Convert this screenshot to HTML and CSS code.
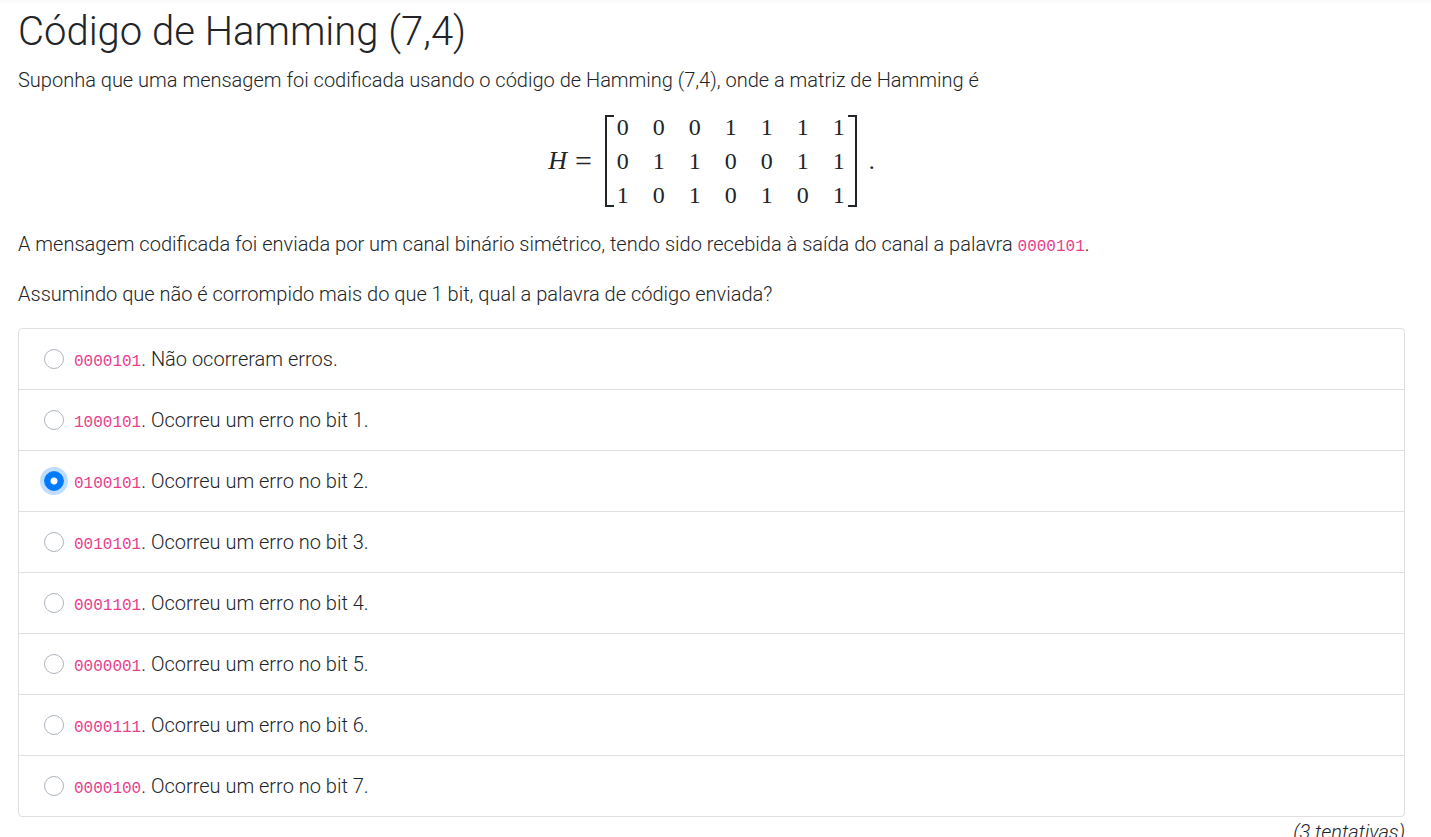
FILE: index.html
```html
<!DOCTYPE html>
<html lang="pt">
<head>
<meta charset="utf-8">
<title>Código de Hamming (7,4)</title>
<link rel="stylesheet" href="styles.css">
</head>
<body>
<main class="question">
  <h1 class="title">Código de Hamming (7,4)</h1>
  <p class="text">Suponha que uma mensagem foi codificada usando o código de Hamming (7,4), onde a matriz de Hamming é</p>
  <div class="formula">
    <i class="symbol">H</i><span class="equals">=</span>
    <div class="matrix">
      <span>0</span><span>0</span><span>0</span><span>1</span><span>1</span><span>1</span><span>1</span>
      <span>0</span><span>1</span><span>1</span><span>0</span><span>0</span><span>1</span><span>1</span>
      <span>1</span><span>0</span><span>1</span><span>0</span><span>1</span><span>0</span><span>1</span>
    </div>
    <span class="stop">.</span>
  </div>
  <p class="text">A mensagem codificada foi enviada por um canal binário simétrico, tendo sido recebida à saída do canal a palavra <code>0000101</code>.</p>
  <p class="text">Assumindo que não é corrompido mais do que 1 bit, qual a palavra de código enviada?</p>
  <form class="options">
    <label class="option"><input class="radio" type="radio" name="answer"><span><code>0000101</code>. Não ocorreram erros.</span></label>
    <label class="option"><input class="radio" type="radio" name="answer"><span><code>1000101</code>. Ocorreu um erro no bit 1.</span></label>
    <label class="option"><input class="radio" type="radio" name="answer" checked><span><code>0100101</code>. Ocorreu um erro no bit 2.</span></label>
    <label class="option"><input class="radio" type="radio" name="answer"><span><code>0010101</code>. Ocorreu um erro no bit 3.</span></label>
    <label class="option"><input class="radio" type="radio" name="answer"><span><code>0001101</code>. Ocorreu um erro no bit 4.</span></label>
    <label class="option"><input class="radio" type="radio" name="answer"><span><code>0000001</code>. Ocorreu um erro no bit 5.</span></label>
    <label class="option"><input class="radio" type="radio" name="answer"><span><code>0000111</code>. Ocorreu um erro no bit 6.</span></label>
    <label class="option"><input class="radio" type="radio" name="answer"><span><code>0000100</code>. Ocorreu um erro no bit 7.</span></label>
  </form>
  <p class="attempts">(3 tentativas)</p>
</main>
</body>
</html>
```
FILE: styles.css
```css
* {
  box-sizing: border-box;
}

html {
  overflow: hidden;
}

body {
  margin: 0;
  color: #212529;
  background: linear-gradient(#f8f8f8, #fff 5px);
  font: 300 20px/30px Roboto, "Open Sans", sans-serif;
}

.question {
  padding: 8px 26px 0 18px;
}

.title {
  margin: 0 0 9px;
  font-size: 40px;
  font-weight: 300;
  line-height: 48px;
}

.text {
  margin: 0 0 20px;
}

code {
  color: #e83e8c;
  font: 400 16px "Liberation Mono", monospace;
}

.formula {
  display: flex;
  align-items: center;
  justify-content: center;
  margin-bottom: 22px;
  font: 400 24px/24px "Liberation Serif", serif;
}

.symbol {
  font-size: 26px;
}

.equals {
  margin: 0 13px 0 8px;
  font-size: 30px;
}

.matrix {
  display: grid;
  grid-template-columns: repeat(7, 12px);
  gap: 10px 24px;
  padding: 0 12px;
  background:
    linear-gradient(#212529, #212529) left / 2px 100%,
    linear-gradient(#212529, #212529) right / 2px 100%,
    linear-gradient(#212529, #212529) left top / 9px 2px,
    linear-gradient(#212529, #212529) left bottom / 9px 2px,
    linear-gradient(#212529, #212529) right top / 9px 2px,
    linear-gradient(#212529, #212529) right bottom / 9px 2px;
  background-repeat: no-repeat;
}

.stop {
  margin-left: 12px;
}

.options {
  margin-top: -1px;
  border: 1px solid #dfdfdf;
  border-radius: 4px;
}

.option {
  display: flex;
  align-items: center;
  gap: 10px;
  padding: 15px 25px;
}

.option + .option {
  border-top: 1px solid #dfdfdf;
}

.radio {
  appearance: none;
  flex: none;
  width: 20px;
  height: 20px;
  margin: 0;
  border: 1px solid #adb5bd;
  border-radius: 50%;
  background: #fff;
}

.radio:checked {
  border-color: #007bff;
  background: radial-gradient(circle, #fff 3px, #007bff 4px);
  box-shadow: 0 0 0 4px #bfdeff;
}

.attempts {
  margin: 0;
  font-style: italic;
  text-align: right;
}
```
